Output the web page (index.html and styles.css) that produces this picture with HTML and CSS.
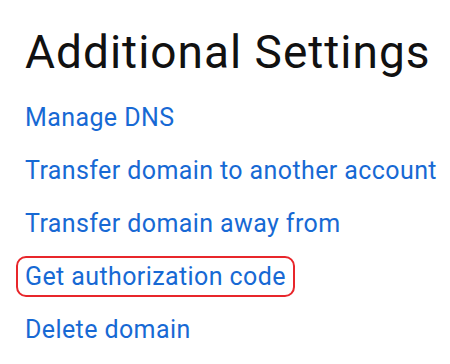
FILE: index.html
```html
<!DOCTYPE html>
<html lang="en">
<head>
<meta charset="utf-8">
<title>Additional Settings</title>
<link rel="stylesheet" href="styles.css">
</head>
<body>
<main class="panel">
  <h1 class="title">Additional Settings</h1>
  <ul class="links">
    <li><a class="link" href="#">Manage DNS</a></li>
    <li><a class="link" href="#">Transfer domain to another account</a></li>
    <li><a class="link" href="#">Transfer domain away from</a></li>
    <li><a class="link link--marked" href="#">Get authorization code</a></li>
    <li><a class="link" href="#">Delete domain</a></li>
  </ul>
</main>
</body>
</html>
```
FILE: styles.css
```css
html, body {
  margin: 0;
  padding: 0;
  background: #ffffff;
}

.panel {
  padding: 24px 0 0 25px;
  font-family: "Roboto", "Liberation Sans", sans-serif;
}

.title {
  margin: 0;
  font-size: 46px;
  line-height: 56px;
  font-weight: 400;
  letter-spacing: 1px;
  color: #111111;
}

.links {
  list-style: none;
  margin: 17px 0 0 -9px;
  padding: 0;
  display: flex;
  flex-direction: column;
  align-items: flex-start;
  gap: 12px;
}

.link {
  display: inline-block;
  padding: 0 7px;
  border: 2px solid transparent;
  border-radius: 10px;
  font-size: 25px;
  line-height: 37px;
  letter-spacing: 0.4px;
  color: #1769d4;
  text-decoration: none;
}

.link--marked {
  border-color: #e8262b;
}
```
